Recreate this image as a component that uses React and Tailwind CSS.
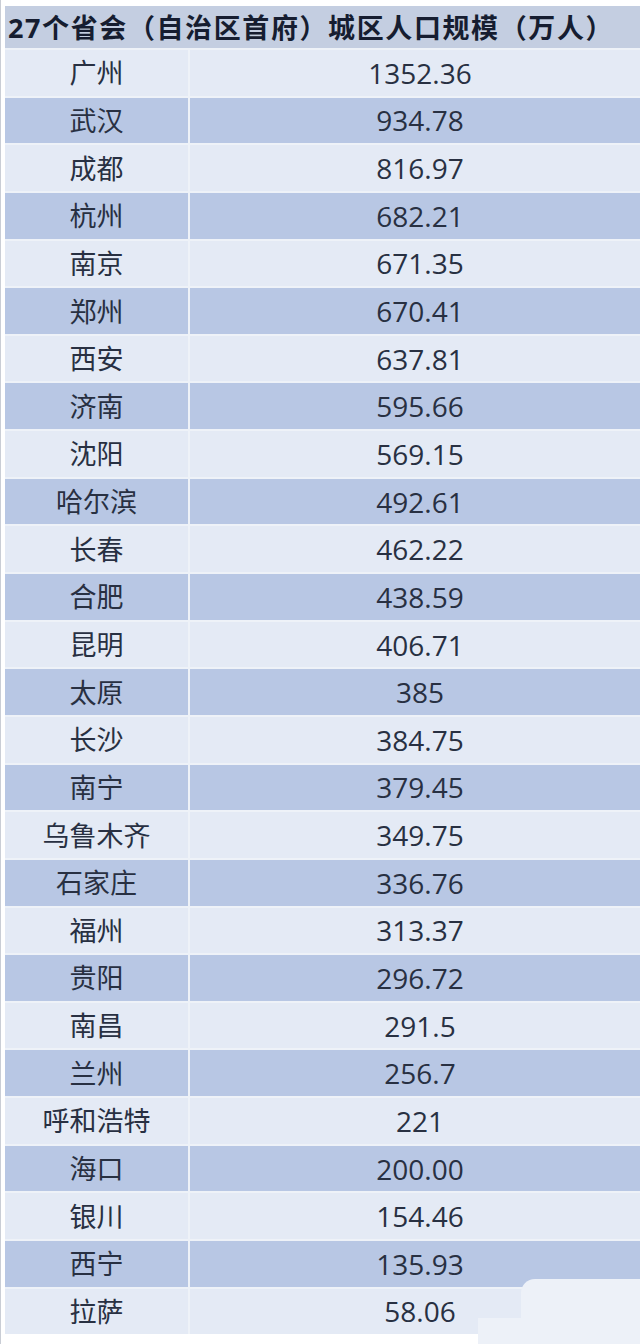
const rows = [
  ["广州", "1352.36"],
  ["武汉", "934.78"],
  ["成都", "816.97"],
  ["杭州", "682.21"],
  ["南京", "671.35"],
  ["郑州", "670.41"],
  ["西安", "637.81"],
  ["济南", "595.66"],
  ["沈阳", "569.15"],
  ["哈尔滨", "492.61"],
  ["长春", "462.22"],
  ["合肥", "438.59"],
  ["昆明", "406.71"],
  ["太原", "385"],
  ["长沙", "384.75"],
  ["南宁", "379.45"],
  ["乌鲁木齐", "349.75"],
  ["石家庄", "336.76"],
  ["福州", "313.37"],
  ["贵阳", "296.72"],
  ["南昌", "291.5"],
  ["兰州", "256.7"],
  ["呼和浩特", "221"],
  ["海口", "200.00"],
  ["银川", "154.46"],
  ["西宁", "135.93"],
  ["拉萨", "58.06"],
];

const font = {
  fontFamily: '"Open Sans", "Noto Sans CJK SC", sans-serif',
};

export default function App() {
  return (
    <div
      className="relative w-[640px] h-[1344px] overflow-hidden bg-white pt-[6px] pl-[4px] border-l border-[#c9cdd5] text-[#283042]"
      style={font}
    >
      {/* Title */}
      <div className="h-[42px] bg-[#c4cee1] flex items-center pl-[3px] whitespace-nowrap text-[27px] leading-none font-bold tracking-[1.6px] text-[#161d30]">
        27个省会（自治区首府）城区人口规模（万人）
      </div>

      {/* Rows */}
      {rows.map(([city, value], i) => (
        <div
          key={city}
          className={
            "flex h-[47.65px] border-t-2 border-[#eef2f8] " +
            (i % 2 === 0 ? "bg-[#e4eaf5]" : "bg-[#b8c7e4]")
          }
        >
          <div className="w-[183px] flex items-center justify-center text-[27px] leading-none">
            {city}
          </div>
          <div className="w-[2px] bg-[#eef2f8]" />
          <div className="flex-1 flex items-center justify-center pl-[10px] text-[28px] leading-none">
            {value}
          </div>
        </div>
      ))}

      {/* faded watermark patch at bottom right */}
      <div className="absolute left-[520px] top-[1279px] w-[140px] h-[80px] bg-[#edf1f8] rounded-tl-[14px]" />
      <div className="absolute left-[477px] top-[1318px] w-[60px] h-[40px] bg-[#edf1f8]" />
    </div>
  );
}
